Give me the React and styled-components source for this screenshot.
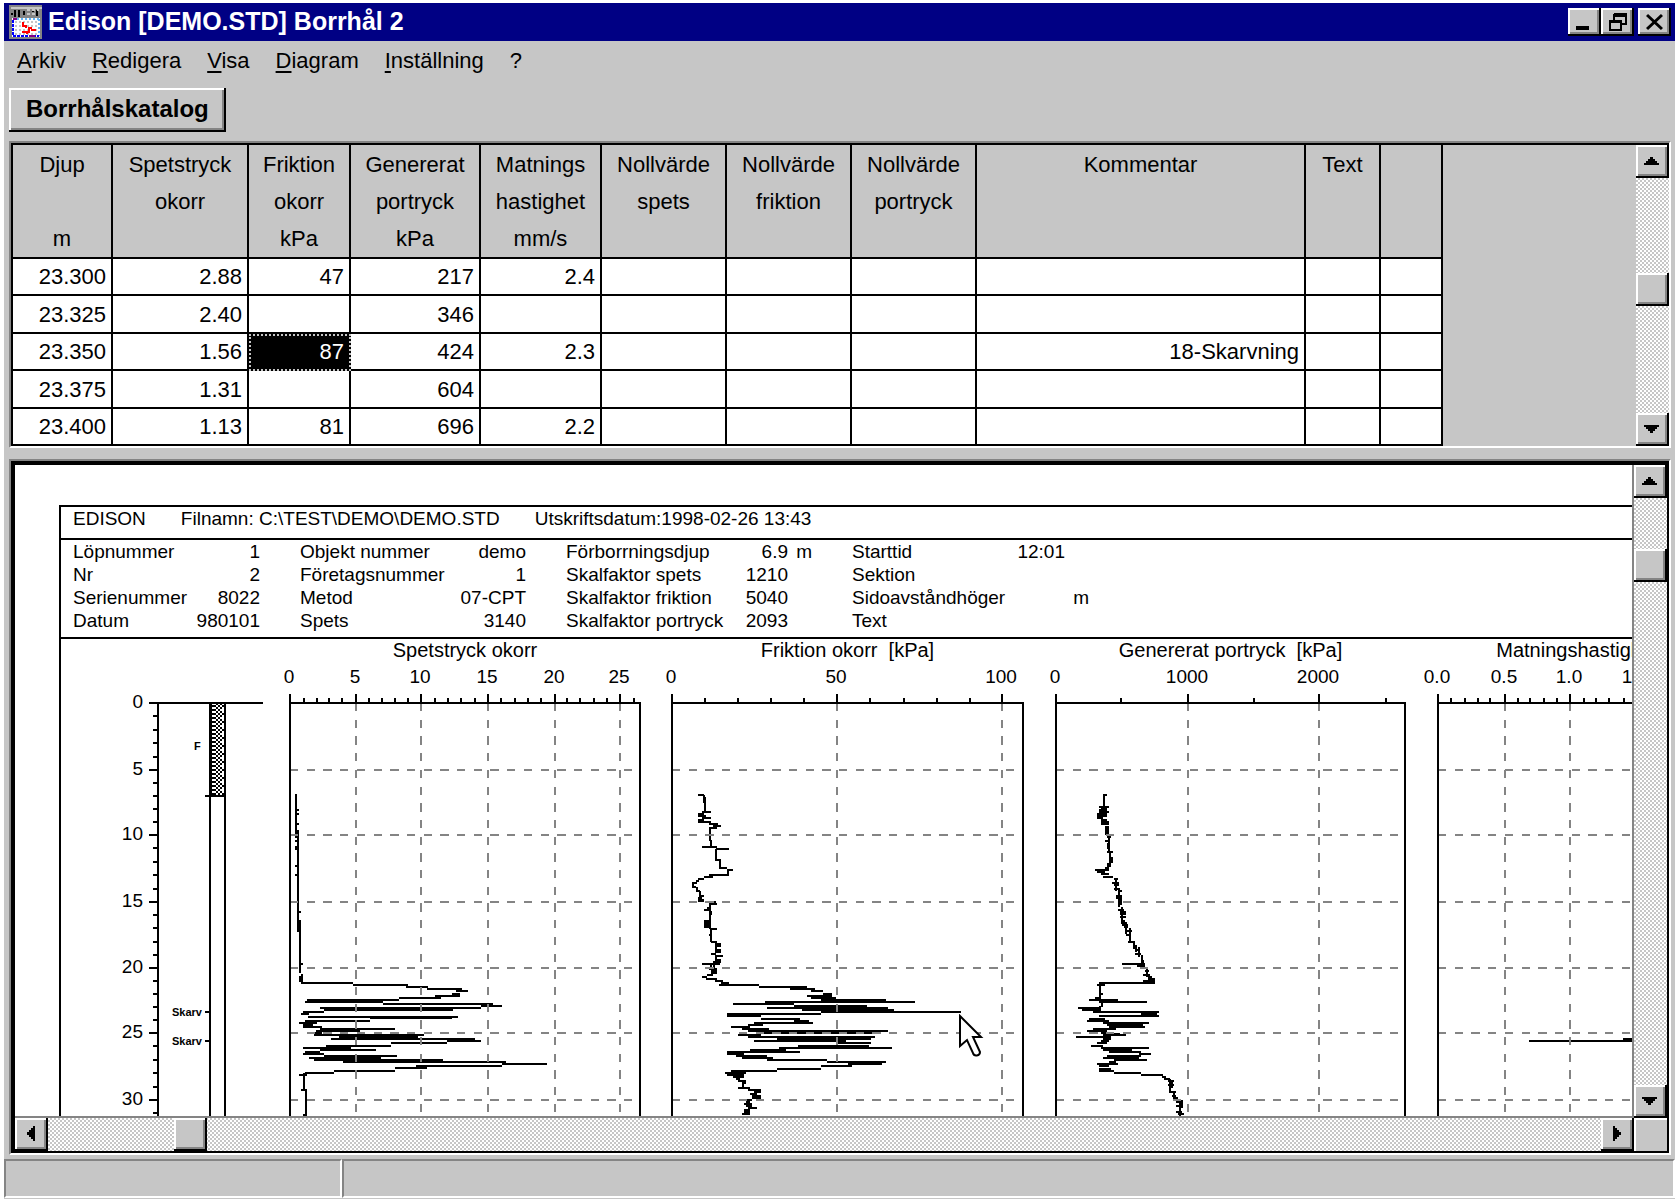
import React from 'react'
import styled, { createGlobalStyle, css } from 'styled-components'

const menus = ['Arkiv', 'Redigera', 'Visa', 'Diagram', 'Inställning']

const columns = [
  { width: 100, lines: ['Djup', '', 'm'] },
  { width: 136, lines: ['Spetstryck', 'okorr', ''] },
  { width: 102, lines: ['Friktion', 'okorr', 'kPa'] },
  { width: 130, lines: ['Genererat', 'portryck', 'kPa'] },
  { width: 121, lines: ['Matnings', 'hastighet', 'mm/s'] },
  { width: 125, lines: ['Nollvärde', 'spets', ''] },
  { width: 125, lines: ['Nollvärde', 'friktion', ''] },
  { width: 125, lines: ['Nollvärde', 'portryck', ''] },
  { width: 329, lines: ['Kommentar', '', ''] },
  { width: 75, lines: ['Text', '', ''] },
  { width: 62, lines: ['', '', ''] },
]

const rows = [
  ['23.300', '2.88', '47', '217', '2.4', '', '', '', '', '', ''],
  ['23.325', '2.40', '', '346', '', '', '', '', '', '', ''],
  ['23.350', '1.56', '87', '424', '2.3', '', '', '', '18-Skarvning', '', ''],
  ['23.375', '1.31', '', '604', '', '', '', '', '', '', ''],
  ['23.400', '1.13', '81', '696', '2.2', '', '', '', '', '', ''],
]

const info = [
  {
    width: 187,
    items: [['Löpnummer', '1'], ['Nr', '2'], ['Serienummer', '8022'], ['Datum', '980101']],
  },
  {
    width: 226,
    items: [['Objekt nummer', 'demo'], ['Företagsnummer', '1'], ['Metod', '07-CPT'], ['Spets', '3140']],
  },
  {
    width: 246,
    unit: true,
    items: [['Förborrningsdjup', '6.9', 'm'], ['Skalfaktor spets', '1210'], ['Skalfaktor friktion', '5040'], ['Skalfaktor portryck', '2093']],
  },
  {
    width: 237,
    unit: true,
    items: [['Starttid', '12:01'], ['Sektion', ''], ['Sidoavståndhöger', '', 'm'], ['Text', '']],
  },
]

// depth 0, 5, 10 ... 30 m in pixels below the axis
const depthLines = [0, 67, 132, 199, 265, 330, 397, 463]

// A run is [y, from, to], a vertical stretch is [x, from, to, 'v'].
// Traces are kept in thirds of a pixel.
const spetsTrace = [
  [48, 43, 165, 'v'], [90, 48, 57], [102, 48, 57], [133, 48, 57], [54, 150, 455, 'v'],
  [171, 45, 54], [183, 45, 54], [202, 45, 54], [208, 45, 54], [259, 45, 54], [284, 45, 54],
  [396, 54, 63], [60, 420, 580, 'v'], [553, 60, 69], [66, 583, 610, 'v'], [590, 57, 66], [597, 57, 66], [603, 57, 66],
  [609, 64, 219], [615, 219, 383], [622, 378, 444], [628, 440, 545], [634, 528, 564], [641, 516, 540],
  [647, 465, 540], [653, 357, 483], [660, 82, 357], [665, 76, 308], [672, 308, 638], [678, 603, 665],
  [684, 120, 603], [690, 133, 520], [697, 70, 133], [703, 64, 88], [710, 84, 533], [715, 270, 515],
  [722, 76, 270], [728, 57, 112], [734, 70, 100], [740, 70, 125], [747, 120, 345], [753, 108, 240],
  [759, 102, 125], [765, 102, 432], [771, 177, 414], [778, 152, 584], [784, 502, 602], [790, 333, 502],
  [797, 138, 333], [803, 70, 213], [809, 120, 288], [816, 76, 120], [822, 70, 132], [828, 132, 350],
  [834, 88, 302], [840, 102, 490], [847, 190, 677], [853, 665, 802], [859, 408, 665], [865, 345, 440],
  [872, 163, 345], [878, 76, 163], [884, 57, 80], [72, 880, 934, 'v'], [929, 64, 80], [78, 929, 1007, 'v'], [1004, 70, 80],
]

const friktionTrace = [
  [46, 114, 133], [132, 46, 68, 'v'], [136, 50, 98, 'v'], [96, 127, 152], [102, 114, 133], [108, 114, 139],
  [114, 127, 152], [120, 114, 133], [127, 114, 152], [133, 146, 175], [139, 160, 183], [145, 148, 170],
  [151, 145, 182, 'v'], [154, 180, 202, 'v'], [202, 127, 170], [208, 168, 207], [168, 208, 242, 'v'],
  [240, 168, 183], [180, 240, 266, 'v'], [264, 177, 200], [271, 200, 220], [205, 271, 286, 'v'], [284, 148, 207],
  [290, 133, 158], [296, 114, 133], [302, 108, 118], [309, 96, 110], [99, 305, 322, 'v'], [320, 96, 108],
  [111, 320, 336, 'v'], [334, 108, 120], [120, 334, 352, 'v'], [347, 116, 133], [353, 114, 127], [359, 114, 133],
  [364, 114, 133], [367, 148, 168], [372, 148, 170], [150, 366, 397, 'v'], [384, 140, 152], [390, 133, 148],
  [397, 148, 157], [403, 148, 157], [151, 404, 447, 'v'], [422, 133, 148], [428, 133, 148], [434, 133, 148],
  [440, 133, 150], [447, 150, 170], [154, 446, 487, 'v'], [466, 146, 156], [485, 154, 170], [167, 485, 520, 'v'],
  [491, 167, 183], [497, 167, 183], [510, 167, 183], [516, 167, 183], [522, 152, 167], [528, 165, 189],
  [168, 528, 550, 'v'], [541, 165, 183], [547, 160, 183], [553, 127, 180], [154, 553, 568, 'v'], [163, 553, 580, 'v'],
  [566, 146, 170], [572, 152, 170], [578, 152, 170], [585, 140, 158], [591, 127, 140], [597, 139, 170],
  [603, 165, 189], [610, 183, 207], [616, 177, 296], [622, 296, 440], [628, 390, 464], [634, 452, 490],
  [641, 490, 515], [647, 440, 515], [653, 452, 527], [660, 483, 678], [666, 315, 765], [672, 220, 402],
  [678, 402, 620], [684, 320, 683], [691, 427, 703], [697, 483, 904], [703, 202, 483], [709, 202, 303],
  [716, 303, 420], [722, 402, 446], [728, 283, 458], [734, 265, 308], [741, 214, 270], [747, 246, 327],
  [753, 265, 683], [759, 308, 660], [765, 233, 302], [771, 265, 645], [778, 352, 633], [784, 283, 558],
  [790, 533, 633], [797, 415, 627], [803, 358, 696], [810, 270, 377], [816, 202, 420], [822, 202, 252],
  [828, 227, 320], [834, 246, 340], [841, 320, 502], [847, 502, 678], [853, 565, 665], [859, 483, 577],
  [866, 352, 483], [872, 214, 352], [878, 195, 258], [884, 202, 252], [890, 220, 252], [897, 227, 240],
  [903, 233, 258], [249, 903, 924, 'v'], [910, 246, 257], [923, 233, 270], [929, 265, 302], [935, 283, 302],
  [941, 270, 290], [947, 277, 302], [953, 277, 302], [960, 258, 277], [966, 258, 270], [972, 252, 277],
  [978, 258, 277], [985, 265, 290], [991, 252, 270], [997, 252, 270], [1003, 246, 270],
]

const portryckTrace = [
  [46, 190, 202], [193, 46, 82, 'v'], [80, 177, 208], [84, 184, 200], [90, 177, 202], [96, 177, 208], [102, 171, 202],
  [108, 171, 202], [114, 171, 190], [120, 184, 202], [127, 184, 208], [133, 184, 208], [199, 139, 165, 'v'],
  [205, 139, 165, 'v'], [208, 165, 215, 'v'], [184, 196, 208], [171, 202, 214], [205, 188, 208, 'v'],
  [215, 202, 220], [211, 215, 254, 'v'], [234, 208, 220], [240, 208, 220], [246, 208, 220], [253, 202, 214],
  [259, 202, 214], [265, 196, 208], [271, 165, 208], [277, 171, 196], [283, 184, 208], [290, 190, 220],
  [227, 293, 332, 'v'], [297, 221, 233], [309, 215, 238], [315, 221, 238], [328, 221, 240], [236, 330, 382, 'v'],
  [334, 233, 245], [347, 227, 245], [353, 227, 245], [242, 345, 375, 'v'], [390, 233, 252], [246, 382, 432, 'v'],
  [397, 240, 257], [403, 240, 257], [412, 240, 257], [252, 420, 436, 'v'], [258, 426, 462, 'v'], [434, 246, 264],
  [440, 252, 264], [453, 258, 276], [465, 258, 271], [269, 445, 487, 'v'], [485, 265, 284], [283, 483, 508, 'v'],
  [289, 495, 515, 'v'], [296, 502, 532, 'v'], [509, 284, 299], [522, 284, 302], [305, 525, 562, 'v'],
  [310, 540, 562, 'v'], [553, 246, 315], [559, 290, 315], [320, 565, 592, 'v'], [572, 315, 327], [585, 308, 327],
  [327, 583, 600, 'v'], [334, 588, 612, 'v'], [598, 327, 345], [603, 308, 345], [609, 178, 345], [615, 171, 196],
  [181, 612, 660, 'v'], [641, 178, 190], [655, 165, 184], [660, 146, 233], [666, 178, 320], [186, 666, 680, 'v'],
  [181, 678, 698, 'v'], [684, 114, 184], [690, 127, 184], [697, 158, 358], [703, 302, 352], [709, 178, 358],
  [716, 146, 196], [722, 140, 208], [728, 190, 327], [734, 202, 308], [741, 208, 315], [747, 158, 227],
  [753, 140, 202], [759, 184, 202], [762, 222, 240], [766, 190, 258], [771, 108, 214], [778, 190, 214],
  [784, 184, 208], [790, 171, 202], [797, 152, 190], [803, 184, 327], [809, 190, 277], [816, 208, 302],
  [822, 296, 333], [828, 202, 302], [834, 190, 296], [841, 221, 320], [847, 208, 227], [853, 171, 233],
  [859, 178, 208], [866, 178, 214], [872, 178, 221], [878, 221, 302], [884, 302, 370], [890, 365, 377],
  [897, 371, 390], [390, 897, 940, 'v'], [903, 384, 402], [915, 384, 402], [396, 900, 925, 'v'], [935, 390, 408],
  [402, 932, 958, 'v'], [947, 396, 408], [953, 402, 414], [420, 957, 1007, 'v'], [426, 960, 985, 'v'],
  [966, 408, 427], [978, 408, 427], [997, 408, 427], [1003, 414, 433],
]

const matningTrace = [
  [783, 460, 768], [777, 742, 768],
]

const plots = [
  {
    title: 'Spetstryck okorr', step: 382, width: 350, shift: -10,
    major: [[0, '0'], [66, '5'], [131, '10'], [198, '15'], [265, '20'], [330, '25']],
    minor: [14, 27, 39, 52, 79, 92, 105, 118, 145, 158, 171, 185, 211, 225, 238, 251, 277, 290, 304, 317, 344],
    trace: spetsTrace,
  },
  {
    title: 'Friktion okorr  [kPa]', step: 384, width: 351, shift: -12, cursor: true,
    major: [[0, '0'], [165, '50'], [330, '100']],
    minor: [33, 66, 99, 132, 198, 232, 265, 298],
    trace: friktionTrace,
  },
  {
    title: 'Genererat portryck  [kPa]', step: 382, width: 349, shift: -16,
    major: [[0, '0'], [132, '1000'], [263, '2000']],
    minor: [65, 198, 330],
    trace: portryckTrace,
  },
  {
    title: 'Matningshastighet  [mm/s]', step: 382, width: 350, shift: -62,
    major: [[0, '0.0'], [67, '0.5'], [132, '1.0'], [198, '1.5']],
    minor: [13, 27, 40, 52, 80, 92, 106, 119, 146, 158, 171, 186],
    trace: matningTrace,
  },
]

const tracePath = (trace) =>
  trace
    .map(([at, from, to, dir]) => (dir ? `M${at} ${from}V${to}` : `M${from} ${at}H${to}`))
    .join('')

const Arrow = ({ dir }) => {
  const shapes = {
    up: 'M0 9V7H2V5H4V3H6V1H9V3H11V5H13V7H15V9Z',
    down: 'M0 1V3H2V5H4V7H6V9H9V7H11V5H13V3H15V1Z',
    left: 'M9 0H7V2H5V4H3V6H1V9H3V11H5V13H7V15H9Z',
    right: 'M1 0H3V2H5V4H7V6H9V9H7V11H5V13H3V15H1Z',
  }
  const flat = dir === 'up' || dir === 'down'
  return (
    <svg width={flat ? 15 : 10} height={flat ? 10 : 15} shapeRendering="crispEdges">
      <path d={shapes[dir]} />
    </svg>
  )
}

const ScrollBar = ({ vertical, value, label }) => (
  <Bar $vertical={vertical}>
    <BarButton aria-label={label + (vertical ? ' upp' : ' vänster')}>
      <Arrow dir={vertical ? 'up' : 'left'} />
    </BarButton>
    <Slider type="range" min="0" max="1000" defaultValue={value} aria-label={label} $vertical={vertical} />
    <BarButton aria-label={label + (vertical ? ' ned' : ' höger')}>
      <Arrow dir={vertical ? 'down' : 'right'} />
    </BarButton>
  </Bar>
)

const AppIcon = () => (
  <svg width="33" height="34" viewBox="0 0 33 34" shapeRendering="crispEdges">
    <rect width="33" height="34" fill="#848484" />
    <rect x="2" y="2" width="31" height="2" fill="#c6c6c6" />
    <path d="M2 9H4M6 5V12M10 5V12M15 6V10M23 6H25M28 5V11" stroke="#000" strokeWidth="2" />
    <path d="M18 5H30M18 9H26" stroke="#c6c6c6" strokeWidth="2" strokeDasharray="3 2" />
    <rect x="3" y="13" width="28" height="19" fill="#fff" />
    <path d="M6 17H30M6 21H30M6 25H30M6 29H30" stroke="#c6c6c6" strokeWidth="2" strokeDasharray="2 2" />
    <path d="M4 14H30M30 14V31" stroke="#63b5f7" strokeWidth="2" strokeDasharray="2 2" fill="none" />
    <path d="M4 15V31H30" stroke="#00f" strokeWidth="2" strokeDasharray="3 1" fill="none" />
    <path d="M14 17V21H17V23M22 25H27M13 27H20V23H23M18 27V29" stroke="#f00" strokeWidth="2" fill="none" />
    <path d="M4 14H8M20 31H26" stroke="#840084" strokeWidth="2" />
  </svg>
)

const DepthScale = () => (
  <svg width="229" height="560">
    <g transform="translate(0 42)" shapeRendering="crispEdges" stroke="#000" strokeWidth="2" fill="none">
      <defs>
        <pattern id="casing" width="14" height="8" patternUnits="userSpaceOnUse" patternTransform="translate(150 0)">
          <rect width="14" height="8" fill="#000" stroke="none" />
          <path d="M1 1H5M1 5H5M7 1H9M11 1H13M5 3H7M9 3H11M7 5H9M11 5H13M5 7H7M9 7H13" stroke="#fff" strokeWidth="2" />
        </pattern>
      </defs>
      <path d="M88 0H202M97 0V520M149 0V520M164 0V520M144 93H165M144 309H149M144 338H149" />
      {depthLines.slice(0, -1).map((y, i) => (
        <g key={y}>
          <path d={`M88 ${y}H97`} />
          {[1, 2, 3, 4].map((n) => {
            const at = Math.round(y + ((depthLines[i + 1] - y) * n) / 5)
            return <path key={n} d={`M92 ${at}H97`} />
          })}
        </g>
      ))}
      <rect x="150" y="1" width="14" height="91" fill="url(#casing)" stroke="none" />
    </g>
    <g transform="translate(0 42)">
      {depthLines.slice(0, -1).map((y, i) => (
        <AxisText key={y} x="82" y={y + 5} textAnchor="end">{i * 5}</AxisText>
      ))}
      <MarkText x="133" y="47">F</MarkText>
      <MarkText x="111" y="313">Skarv</MarkText>
      <MarkText x="111" y="342">Skarv</MarkText>
    </g>
  </svg>
)

const Plot = ({ plot }) => (
  <Figure $step={plot.step}>
    <Caption $width={plot.width}>{plot.title}</Caption>
    <PlotSvg width={plot.width} height="560">
      <g transform="translate(0 42)">
        {plot.major.map(([x, label]) => (
          <AxisText key={label} x={x - 1} y="-20" textAnchor="middle">{label}</AxisText>
        ))}
        <g shapeRendering="crispEdges" strokeWidth="2" fill="none">
          <path
            d={tracePath(plot.trace)}
            transform={`translate(${plot.shift} 77) scale(0.3333)`}
            stroke="#000"
            strokeWidth="6.6"
          />
          <path
            d={
              depthLines.slice(1).map((y) => `M0 ${y}H${plot.width - 6}`).join('') +
              plot.major.slice(1).map(([x]) => `M${x} 0V520`).join('')
            }
            stroke="#848484"
            strokeDasharray="8.3 8.4"
          />
          <path
            d={
              `M0 -9V520M0 0H${plot.width}V520` +
              plot.major.slice(1).map(([x]) => `M${x} -9V0`).join('') +
              plot.minor.map((x) => `M${x} -5V0`).join('')
            }
            stroke="#000"
          />
        </g>
      </g>
    </PlotSvg>
    {plot.cursor && (
      <Cursor width="26" height="44" viewBox="-2 -2 26 44">
        <path d="M0 0L21 21H13L20 36C20 40 14 41 13 37L7 24L0 30Z" fill="#fff" stroke="#000" strokeWidth="2" />
      </Cursor>
    )}
  </Figure>
)

const App = () => {
  return (
    <Window>
      <GlobalStyle />
      <TitleBar>
        <AppIcon />
        <Title>Edison [DEMO.STD] Borrhål 2</Title>
        <TitleButton aria-label="Minimera">
          <svg width="17" height="20"><path d="M0 16H13" stroke="#000" strokeWidth="4" /></svg>
        </TitleButton>
        <TitleButton aria-label="Återställ">
          <svg width="18" height="20" shapeRendering="crispEdges">
            <path d="M5 2H18M5 8V2M17 2V12H12M1 9H13M1 8V18H12V8" fill="none" stroke="#000" strokeWidth="2" />
            <path d="M5 3H18M0 9H13" stroke="#000" strokeWidth="3" />
          </svg>
        </TitleButton>
        <TitleButton $apart aria-label="Stäng">
          <svg width="17" height="20"><path d="M1 3L16 17M16 3L1 17" stroke="#000" strokeWidth="3" /></svg>
        </TitleButton>
      </TitleBar>

      <Menu>
        {menus.map((name) => (
          <MenuItem key={name}><u>{name[0]}</u>{name.slice(1)}</MenuItem>
        ))}
        <MenuItem>?</MenuItem>
      </Menu>

      <CatalogButton>Borrhålskatalog</CatalogButton>

      <TablePanel>
        <Table>
          <colgroup>
            {columns.map((c, i) => <Col key={i} $width={c.width} />)}
          </colgroup>
          <thead>
            <tr>
              {columns.map((c, i) => (
                <Head key={i} scope="col">
                  {c.lines.map((line, n) => <HeadLine key={n}>{line}</HeadLine>)}
                </Head>
              ))}
            </tr>
          </thead>
          <tbody>
            {rows.map((row) => (
              <Row key={row[0]}>
                {row.map((value, i) => (
                  <Cell key={i} $selected={value === '87'}>{value}</Cell>
                ))}
              </Row>
            ))}
          </tbody>
        </Table>
        <ScrollBar vertical value="470" label="Rulla tabell" />
      </TablePanel>

      <ReportPanel>
        <Page>
          <Sheet>
            <FileLine>
              <span>EDISON</span>
              <span>Filnamn: C:\TEST\DEMO\DEMO.STD</span>
              <span>Utskriftsdatum:1998-02-26 13:43</span>
            </FileLine>
            <Info>
              {info.map((group) => (
                <Group key={group.width} $width={group.width} $unit={group.unit}>
                  {group.items.map(([name, value, unit]) => (
                    <React.Fragment key={name}>
                      <dt>{name}</dt>
                      <dd>{value}</dd>
                      {group.unit && <Unit>{unit}</Unit>}
                    </React.Fragment>
                  ))}
                </Group>
              ))}
            </Info>
            <Diagram>
              <ScaleBox><DepthScale /></ScaleBox>
              {plots.map((plot) => <Plot key={plot.title} plot={plot} />)}
            </Diagram>
          </Sheet>
        </Page>
        <ScrollBar vertical value="92" label="Rulla diagram" />
        <ScrollBar value="83" label="Rulla diagram i sidled" />
        <Corner />
      </ReportPanel>

      <StatusBar>
        <StatusField $width={338} />
        <StatusField />
      </StatusBar>
    </Window>
  )
}

export default App

const GlobalStyle = createGlobalStyle`
    * {
        box-sizing: border-box;
    }

    body {
        margin: 0;
        background: #fff;
        color: #000;
        font-family: "Liberation Sans", Arial, sans-serif;
        font-size: 22px;
    }

    button {
        font: inherit;
        color: inherit;
    }
`

const raised = css`
    background: #c6c6c6;
    border: 0;
    box-shadow: inset -2px -2px #000, inset 2px 2px #fff, inset -4px -4px #848484;
`

const Window = styled.div`
    height: calc(100vh - 5px);
    margin: 3px 1px 0 4px;
    background: #c6c6c6;

    display: flex;
    flex-direction: column;
`

const TitleBar = styled.header`
    height: 38px;
    padding: 0 4px 0 5px;
    background: #000084;
    color: #fff;
    flex-shrink: 0;

    display: flex;
    align-items: center;
`

const Title = styled.h1`
    margin: 0;
    padding: 0 0 3px 6px;
    flex: 1;
    font-size: 25px;
    line-height: 32px;
    white-space: nowrap;
`

const TitleButton = styled.button`
    ${raised}
    width: 33px;
    height: 28px;
    padding: 0;
    margin-left: ${(props) => (props.$apart ? '4px' : '0')};

    display: flex;
    justify-content: center;
    align-items: center;
`

const Menu = styled.nav`
    padding: 7px 13px 14px;

    display: flex;
    gap: 26px;
`

const MenuItem = styled.button`
    padding: 0;
    border: 0;
    background: none;
    line-height: 26px;

    u {
        text-decoration-thickness: 2px;
        text-underline-offset: 3px;
        text-decoration-skip-ink: none;
    }
`

const CatalogButton = styled.button`
    ${raised}
    align-self: flex-start;
    height: 44px;
    margin: 0 0 9px 5px;
    padding: 0 17px 2px;
    flex-shrink: 0;
    font-size: 24px;
    font-weight: bold;
`

const TablePanel = styled.section`
    margin: 0 4px 11px 5px;
    border: 2px solid;
    border-color: #848484 #fff #fff #848484;
    box-shadow: inset 2px 2px #000;
    padding: 2px 0 0 2px;
    flex-shrink: 0;

    display: flex;
    justify-content: space-between;
`

const Table = styled.table`
    table-layout: fixed;
    width: 1430px;
    border-spacing: 0;
`

const Col = styled.col`
    width: ${(props) => props.$width}px;
`

const Head = styled.th`
    height: 113px;
    padding: 1px 0 0;
    border: solid #000;
    border-width: 0 2px 2px 0;
    font-weight: normal;
    vertical-align: top;
`

const HeadLine = styled.div`
    height: 37px;
    line-height: 37px;
`

const Row = styled.tr`
    height: 37px;

    &:nth-child(even) {
        height: 38px;
    }
`

const Cell = styled.td`
    padding: 0 5px 0 0;
    border: solid #000;
    border-width: 0 2px 2px 0;
    background: ${(props) => (props.$selected ? '#000' : '#fff')};
    color: ${(props) => (props.$selected ? '#fff' : '#000')};
    line-height: 35px;
    text-align: right;
    outline: ${(props) => (props.$selected ? '2px dotted #c6c6c6' : 'none')};
    outline-offset: -2px;
`

const Bar = styled.div`
    display: flex;
    flex-direction: ${(props) => (props.$vertical ? 'column' : 'row')};
    width: ${(props) => (props.$vertical ? '33px' : 'auto')};
    min-width: 0;
    min-height: 0;
`

const BarButton = styled.button`
    ${raised}
    width: 33px;
    height: 33px;
    padding: 0 2px 2px 0;
    flex-shrink: 0;

    display: flex;
    justify-content: center;
    align-items: center;
`

const Slider = styled.input`
    appearance: none;
    flex: 1;
    min-width: 0;
    min-height: 0;
    margin: 0;
    width: ${(props) => (props.$vertical ? '33px' : 'auto')};
    height: ${(props) => (props.$vertical ? 'auto' : '33px')};
    writing-mode: ${(props) => (props.$vertical ? 'vertical-lr' : 'horizontal-tb')};
    background: repeating-conic-gradient(#c6c6c6 0 25%, #fff 0 50%) 0 0 / 4px 4px;

    &::-webkit-slider-thumb {
        appearance: none;
        width: 33px;
        height: 33px;
        border-radius: 0;
        ${raised}
    }
`

const ReportPanel = styled.section`
    margin: 0 4px 4px 5px;
    border: 2px solid;
    border-color: #848484 #fff #fff #848484;
    box-shadow: inset 4px 4px #000, inset -2px -2px #000;
    padding: 4px 2px 2px 4px;
    flex: 1;
    min-height: 0;

    display: grid;
    grid-template-columns: minmax(0, 1fr) 33px;
    grid-template-rows: minmax(0, 1fr) 33px;
`

const Page = styled.div`
    padding: 40px 0 0 44px;
    border: solid #848484;
    border-width: 0 2px 2px 0;
    background: #fff;
    overflow: hidden;
`

const Sheet = styled.article`
    border: solid #000;
    border-width: 2px 0 0 2px;
    font-size: 19px;
    white-space: nowrap;
`

const FileLine = styled.header`
    height: 33px;
    padding: 1px 0 0 12px;
    border-bottom: 2px solid #000;
    line-height: 22px;

    display: flex;
    gap: 35px;
`

const Info = styled.div`
    padding: 0 0 5px 12px;
    border-bottom: 2px solid #000;

    display: flex;
    gap: 40px;
`

const Group = styled.dl`
    width: ${(props) => props.$width}px;
    margin: 0;
    line-height: 23px;

    display: grid;
    grid-template-columns: ${(props) => (props.$unit ? 'auto 1fr 24px' : 'auto 1fr')};

    dd {
        margin: 0;
        text-align: right;
    }
`

const Unit = styled.span`
    text-align: right;
`

const Diagram = styled.div`
    display: flex;
`

const ScaleBox = styled.div`
    width: 229px;
    padding-top: 22px;
    flex-shrink: 0;
`

const Figure = styled.figure`
    position: relative;
    width: ${(props) => props.$step}px;
    margin: 0;
    flex-shrink: 0;
`

const Caption = styled.figcaption`
    width: ${(props) => props.$width}px;
    height: 22px;
    font-size: 20px;
    line-height: 22px;
    text-align: center;
    white-space: pre;
`

const PlotSvg = styled.svg`
    display: block;
    overflow: visible;
`

const AxisText = styled.text`
    font-size: 19px;
`

const MarkText = styled.text`
    font-size: 11px;
    font-weight: bold;
`

const Cursor = styled.svg`
    position: absolute;
    left: 286px;
    top: 375px;
`

const Corner = styled.div`
    border: solid #fff;
    border-width: 2px 0 0 2px;
    background: #c6c6c6;
`

const StatusBar = styled.footer`
    height: 39px;
    margin-bottom: 1px;
    flex-shrink: 0;

    display: flex;
`

const StatusField = styled.div`
    width: ${(props) => (props.$width ? props.$width + 'px' : 'auto')};
    flex: ${(props) => (props.$width ? 'none' : 1)};
    border: 2px solid;
    border-color: #848484 #fff #fff #848484;
`
